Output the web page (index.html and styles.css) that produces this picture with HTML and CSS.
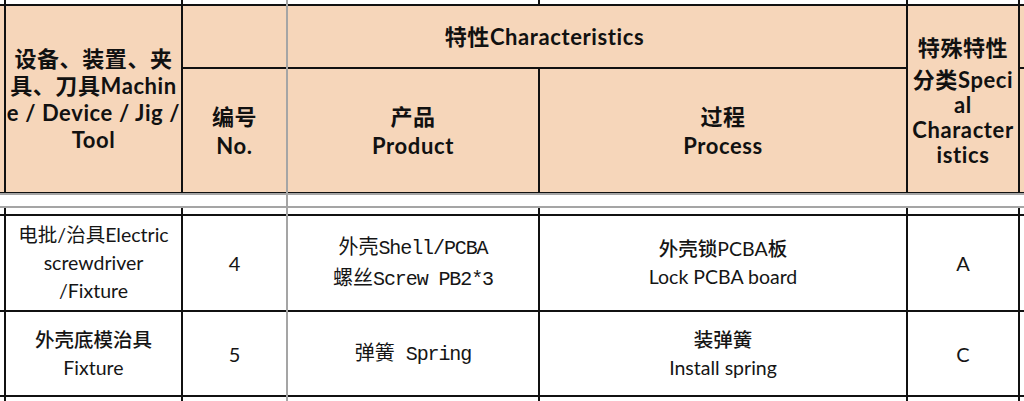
FILE: index.html
```html
<!DOCTYPE html>
<html lang="zh">
<head>
<meta charset="utf-8">
<title>Characteristics</title>
<link rel="stylesheet" href="styles.css">
</head>
<body>
<div class="sheet">
  <div class="grid head">
    <div class="cell white"></div>
    <div class="cell white"></div>
    <div class="cell white"></div>
    <div class="cell white"></div>
    <div class="cell white"></div>
    <div class="cell white"></div>
    <div class="cell white"></div>

    <div class="cell peach c0 rspan"></div>
    <div class="cell peach hdr c1 rspan"><div class="in">设备、装置、夹<br>具、刀具Machin<br>e / Device / Jig /<br>Tool</div></div>
    <div class="cell peach hdr top-char"><div class="in">特性Characteristics</div></div>
    <div class="cell peach hdr c5 rspan special"><div class="in"><span class="ln tall">特殊特性</span><span class="ln">分类Speci</span><span class="ln">al</span><span class="ln">Character</span><span class="ln">istics</span></div></div>
    <div class="cell peach c6 r1"></div>

    <div class="cell peach hdr two c2 r2"><div class="in">编号<br>No.</div></div>
    <div class="cell peach hdr two c3 r2"><div class="in">产品<br>Product</div></div>
    <div class="cell peach hdr two c4 r2"><div class="in">过程<br>Process</div></div>
    <div class="cell peach c6 r2"></div>
  </div>
  <div class="freeze-h"></div>
  <div class="strip"></div>
  <div class="freeze-h"></div>
  <div class="grid body">
    <div class="cell white"></div>
    <div class="cell white"></div>
    <div class="cell white"></div>
    <div class="cell white"></div>
    <div class="cell white"></div>
    <div class="cell white"></div>
    <div class="cell white"></div>

    <div class="cell white"></div>
    <div class="cell white txt"><div class="in">电批/治具Electric<br>screwdriver<br>/Fixture</div></div>
    <div class="cell white txt num"><div class="in">4</div></div>
    <div class="cell white prod"><div class="in">外壳<span class="mono">Shell/PCBA</span><br>螺丝<span class="mono">Screw PB2*3</span></div></div>
    <div class="cell white txt"><div class="in"><span class="med">外壳锁</span>PCBA<span class="med">板</span><br>Lock PCBA board</div></div>
    <div class="cell white txt num"><div class="in">A</div></div>
    <div class="cell white"></div>

    <div class="cell white"></div>
    <div class="cell white txt"><div class="in"><span class="med">外壳底模治具</span><br>Fixture</div></div>
    <div class="cell white txt num"><div class="in">5</div></div>
    <div class="cell white prod"><div class="in">弹簧<span class="mono"> Spring</span></div></div>
    <div class="cell white txt"><div class="in"><span class="med">装弹簧</span><br>Install spring</div></div>
    <div class="cell white txt num"><div class="in">C</div></div>
    <div class="cell white"></div>

    <div class="cell white"></div>
    <div class="cell white"></div>
    <div class="cell white"></div>
    <div class="cell white"></div>
    <div class="cell white"></div>
    <div class="cell white"></div>
    <div class="cell white"></div>
  </div>
  <div class="freeze-v"></div>
</div>
</body>
</html>
```

FILE: styles.css
```css
html, body {
  margin: 0;
  padding: 0;
  background: #ffffff;
}

.sheet {
  position: relative;
  width: 1024px;
  height: 401px;
  overflow: hidden;
  background: #ffffff;
}

.grid {
  display: grid;
  grid-template-columns: 4px 175px 103px 250px 366px 110px 60px;
  gap: 2px;
  background: #111111;
  width: max-content;
}

.head {
  grid-template-rows: 4px 61px 123px;
  padding-bottom: 1px;
}

.body {
  grid-template-rows: 6px 94px 83px 10px;
}

.cell {
  display: flex;
  align-items: center;
  justify-content: center;
  text-align: center;
  min-width: 0;
}

.in {
  white-space: nowrap;
}

.white { background: #ffffff; }
.peach { background: #f6d6ba; }

.c0 { grid-column: 1; }
.c1 { grid-column: 2; }
.c2 { grid-column: 3; }
.c3 { grid-column: 4; }
.c4 { grid-column: 5; }
.c5 { grid-column: 6; }
.c6 { grid-column: 7; }
.rspan { grid-row: 2 / 4; }
.r1 { grid-row: 2; }
.r2 { grid-row: 3; }
.top-char { grid-column: 3 / 6; grid-row: 2; }

.hdr {
  font-family: "Lato", "Noto Sans CJK SC", sans-serif;
  font-weight: 700;
  font-size: 22px;
  letter-spacing: 0.6px;
  line-height: 27px;
  color: #111111;
}

.hdr.two { line-height: 29px; }

.special { line-height: 25px; }
.ln { display: block; }
.ln.tall { line-height: 32px; margin-bottom: 3px; }

.txt {
  font-family: "Lato", "Noto Sans CJK SC", sans-serif;
  font-size: 19.5px;
  line-height: 28px;
  color: #151515;
}

.num { font-size: 20px; }

.med { font-weight: 500; }

.prod {
  font-family: "Noto Sans CJK SC", sans-serif;
  font-size: 20px;
  line-height: 28px;
  color: #151515;
}

.mono {
  font-family: "Liberation Mono", monospace;
  font-size: 20px;
  letter-spacing: -1.1px;
  white-space: pre;
}

.freeze-h {
  height: 2px;
  background: #a5a5a5;
}

.strip {
  height: 11px;
  background: #ffffff;
}

.freeze-v {
  position: absolute;
  left: 286px;
  top: 0;
  width: 2px;
  height: 100%;
  background: #a5a5a5;
}
```
